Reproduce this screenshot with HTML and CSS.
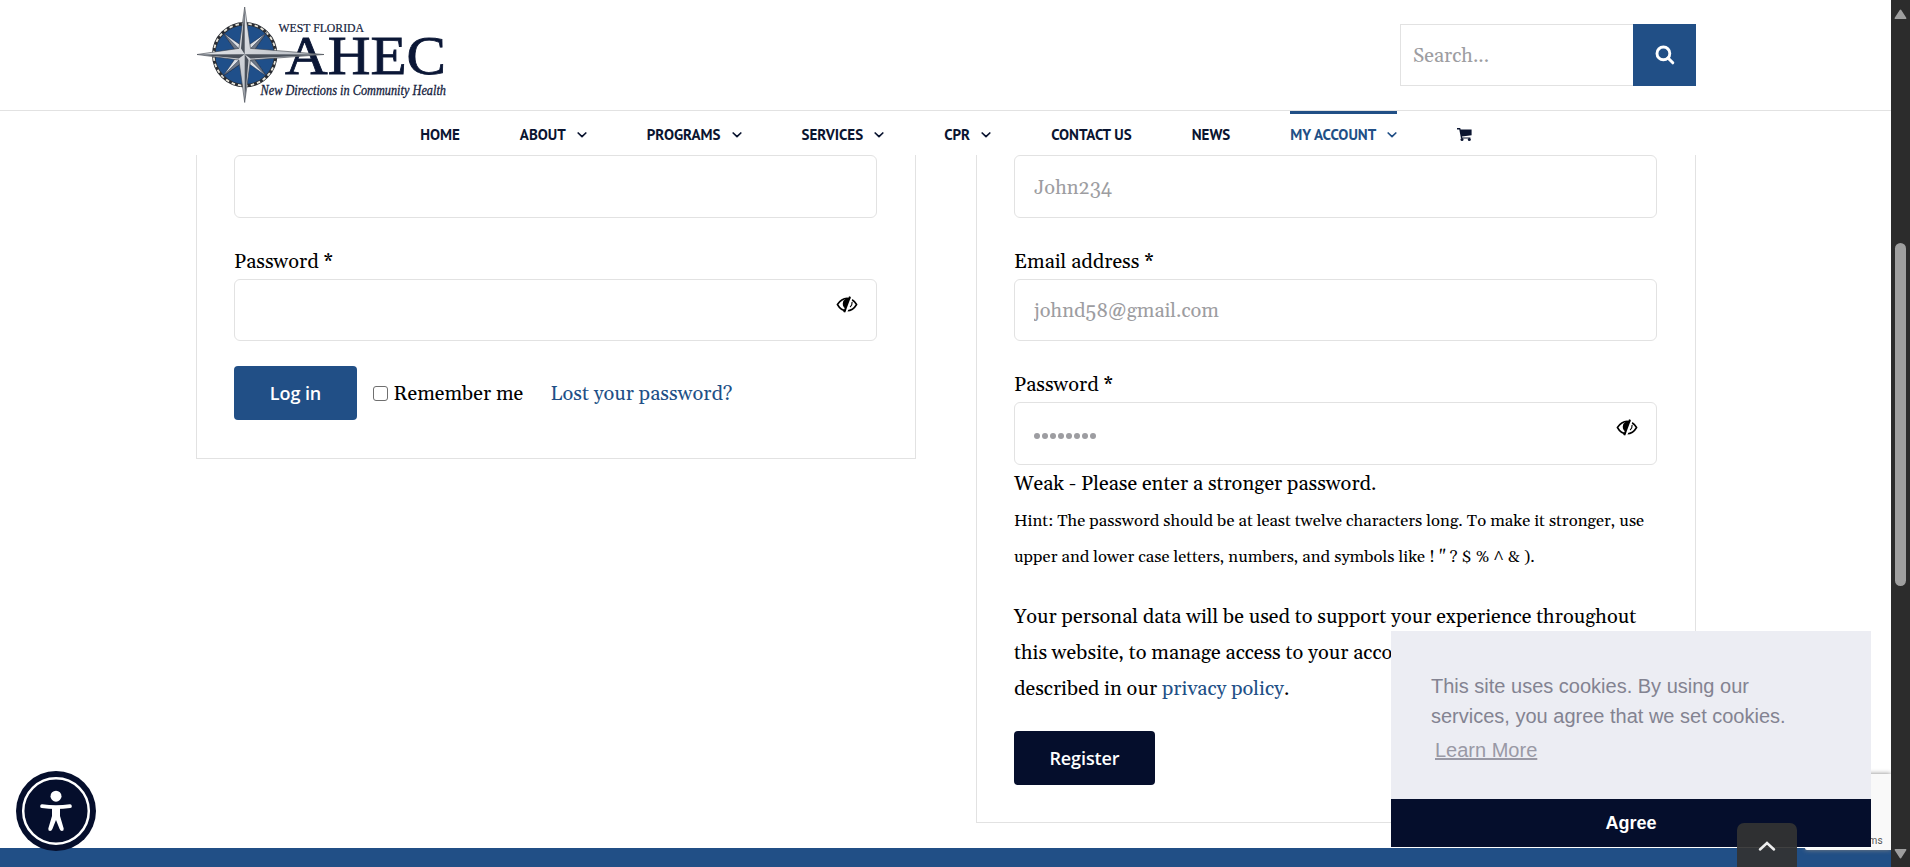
FILE: index.html
```html
<!DOCTYPE html>
<html lang="en">
<head>
<meta charset="utf-8">
<title>My Account - West Florida AHEC</title>
<link rel="stylesheet" href="styles.css">
</head>
<body>
<svg class="defs" width="0" height="0" aria-hidden="true">
  <symbol id="chev" viewBox="0 0 10 6"><path d="M1.2 1 5 4.7 8.8 1" fill="none" stroke="currentColor" stroke-width="1.7" stroke-linecap="round" stroke-linejoin="round"/></symbol>
  <symbol id="eye" viewBox="0 0 20 16">
    <path d="M1 8C4 3.4 7 2.2 10 2.2S16.500 3.600 19 8C16.500 12.400 13 13.900 10 13.900S3.500 12.600 1 8Z" fill="none" stroke="currentColor" stroke-width="1.500"/>
    <path d="M12.500 2.500 8.600 12C6 10.500 5.400 8 6.500 4.800 8 2.500 10 2 12.500 2.500Z" fill="currentColor"/>
    <path d="M14.700 1 9.200 15.500" stroke="#fff" stroke-width="2"/>
    <path d="M12.800.6 7.400 15.300" stroke="currentColor" stroke-width="1.900"/>
    <path d="M14.800 5.500C15 7.500 14.200 9.200 12.900 10.300" fill="none" stroke="currentColor" stroke-width="1.100"/>
  </symbol>
</svg>
<div class="page">
  <header class="header">
    <div class="wrap topbar">
      <svg class="logo" viewBox="196 4 252 100" width="252" height="100" role="img" aria-label="West Florida AHEC">
        <defs>
          <linearGradient id="silver" x1="0" y1="0" x2="1" y2="1"><stop offset="0" stop-color="#f7f8fa"/><stop offset="1" stop-color="#9fa5ae"/></linearGradient>
        </defs>
        <circle cx="244.700" cy="54.700" r="31" fill="#1f4f8a" stroke="#2a2d33" stroke-width="3.400"/>
        <circle cx="244.700" cy="54.700" r="31" fill="none" stroke="#e8e6dc" stroke-width="1.800" stroke-dasharray="3.500 3"/>
        <g stroke="#17233a" stroke-width=".5" transform="translate(0 .7)">
          <path d="M223 32 248.700 50 240.700 57.400Z M266.400 32 248.700 57.400 240.700 50Z M223 75.400 240.700 50 248.700 57.400Z M266.400 75.400 240.700 57.400 248.700 50Z" fill="#dcdfe4"/>
          <path d="M223 32 244.700 53.700 240.700 57.400Z M266.400 32 244.700 53.700 248.700 57.400Z M223 75.400 244.700 53.700 248.700 57.400Z M266.400 75.400 244.700 53.700 248.700 50Z" fill="#6e7887"/>
        </g>
        <text class="logo-name" x="285" y="73.700" textLength="161" lengthAdjust="spacingAndGlyphs">AHEC</text>
        <path d="M244.700 7 250.500 48.400 324 54.500 250.500 60 244.700 102.500 238.900 60 197 54.500 238.900 48.400Z" fill="url(#silver)" stroke="#3a4048" stroke-width=".6"/>
        <path d="M244.700 7V54.300L241 48.400Z M324 54.500 244.700 54.300 250.500 58.500Z M244.700 102.500V54.300L248.500 60Z M197 54.500 244.700 54.300 238.900 58.500Z" fill="#4a515b"/>
        <text class="logo-top" x="278.500" y="32" textLength="85.500" lengthAdjust="spacingAndGlyphs">WEST FLORIDA</text>
        <text class="logo-tag" x="260.500" y="94.700" textLength="185.500" lengthAdjust="spacingAndGlyphs">New Directions in Community Health</text>
      </svg>
      <form class="search">
        <input class="search-input" type="text" placeholder="Search..." aria-label="Search">
        <button class="search-btn" type="button" aria-label="Search">
          <svg width="20" height="20" viewBox="0 0 20 20"><circle cx="8.400" cy="8.400" r="6.400" fill="none" stroke="#fff" stroke-width="2.900"/><path d="M13 13 17.800 17.800" stroke="#fff" stroke-width="3" stroke-linecap="round"/></svg>
        </button>
      </form>
    </div>
    <nav class="nav">
      <a class="nav-item">HOME</a>
      <a class="nav-item">ABOUT<svg class="chev"><use href="#chev"/></svg></a>
      <a class="nav-item">PROGRAMS<svg class="chev"><use href="#chev"/></svg></a>
      <a class="nav-item">SERVICES<svg class="chev"><use href="#chev"/></svg></a>
      <a class="nav-item">CPR<svg class="chev"><use href="#chev"/></svg></a>
      <a class="nav-item">CONTACT US</a>
      <a class="nav-item">NEWS</a>
      <a class="nav-item active">MY ACCOUNT<svg class="chev"><use href="#chev"/></svg></a>
      <a class="nav-item"><svg class="cart" viewBox="0 0 15 13" width="15" height="13"><path d="M0 0H3.200L3.600 1.400H14.600V7.200L5 8.400 5.200 9.400H13.400V10.400H4L2.300 1.400H0Z" fill="currentColor"/><circle cx="5" cy="11.500" r="1.500" fill="currentColor"/><circle cx="12.300" cy="11.500" r="1.500" fill="currentColor"/></svg></a>
    </nav>
  </header>

  <main class="wrap cards">
    <section class="card card-login">
      <input class="field field-tall" type="text" aria-label="Username">
      <label class="label">Password *</label>
      <div class="field field-pw"><svg class="eye"><use href="#eye"/></svg></div>
      <div class="login-row">
        <button class="btn btn-login" type="button">Log in</button>
        <label class="remember"><input class="check" type="checkbox"><span class="row-text">Remember me</span></label>
        <a class="link row-text">Lost your password?</a>
      </div>
    </section>
    <section class="card card-register">
      <input class="field field-tall" type="text" placeholder="John234" aria-label="Username">
      <label class="label">Email address *</label>
      <input class="field" type="text" placeholder="johnd58@gmail.com" aria-label="Email">
      <label class="label">Password *</label>
      <div class="field field-tall field-pw"><span class="dots"><i></i><i></i><i></i><i></i><i></i><i></i><i></i><i></i></span><svg class="eye"><use href="#eye"/></svg></div>
      <div class="strength">Weak - Please enter a stronger password.</div>
      <div class="hint">Hint: The password should be at least twelve characters long. To make it stronger, use upper and lower case letters, numbers, and symbols like ! " ? $ % ^ &amp; ).</div>
      <p class="privacy">Your personal data will be used to support your experience throughout<br>this website, to manage access to your account, and for other purposes<br>described in our <a class="link">privacy policy</a>.</p>
      <button class="btn btn-register" type="button">Register</button>
    </section>
  </main>
  <footer class="footer"></footer>
</div>

<div class="captcha"><span class="captcha-text">Terms</span></div>
<aside class="cookie">
  <div class="cookie-body">This site uses cookies. By using our<br>services, you agree that we set cookies.<a class="learn">Learn More</a></div>
  <button class="agree" type="button">Agree</button>
</aside>
<div class="to-top"><svg width="20" height="12" viewBox="0 0 20 12"><path d="M3 9.500 10 3 17 9.500" fill="none" stroke="#eee" stroke-width="2.500" stroke-linecap="round"/></svg></div>
<div class="a11y">
  <svg width="80" height="80" viewBox="0 0 80 80"><circle cx="40" cy="40" r="40" fill="#050e2c"/><circle cx="40" cy="40" r="32.800" fill="none" stroke="#fff" stroke-width="2.500"/>
  <circle cx="40" cy="25.200" r="5.500" fill="#fff"/>
  <path d="M26 35.200Q40 37.200 54 35.200" fill="none" stroke="#fff" stroke-width="3.700" stroke-linecap="round"/>
  <path d="M36 36H44V45L47.700 57.500Q48 60 45.900 60 44.400 60 43.600 58L40 49 36.400 58Q35.600 60 34.100 60 32 60 32.300 57.500L36 45Z" fill="#fff"/></svg>
</div>
<div class="scrollbar">
  <svg width="13" height="11" viewBox="0 0 13 11"><path d="M6.500 1.500 11.500 9.200H1.500Z" fill="#9f9f9f" stroke="#9f9f9f" stroke-width="1.800" stroke-linejoin="round"/></svg>
  <div class="thumb"></div>
  <svg class="down" width="13" height="11" viewBox="0 0 13 11"><path d="M6.500 9.500 11.500 1.800H1.500Z" fill="#9f9f9f" stroke="#9f9f9f" stroke-width="1.800" stroke-linejoin="round"/></svg>
</div>
</body>
</html>
```
FILE: styles.css
```css
* { box-sizing: border-box; }
html, body { margin: 0; height: 867px; overflow: hidden; background: #fff; }
body {
  color: #000;
  font: 20px/36px Gelasio, Georgia, "Liberation Serif", serif;
  font-feature-settings: "onum";
}
button, input { font: inherit; font-feature-settings: inherit; border: 0; padding: 0; margin: 0; }
.defs { position: absolute; }
.page { width: 1891px; height: 867px; display: flex; flex-direction: column; }
.wrap { width: 1500px; margin-left: 196px; }

.header { height: 155px; flex: none; }
.topbar { height: 110px; display: flex; justify-content: space-between; align-items: flex-start; }
.logo { margin-top: 4px; }
.logo-top { font: 11.5px "Liberation Serif", serif; fill: #14213c; stroke: #14213c; stroke-width: .2px; }
.logo-name { font: 55px "Liberation Serif", serif; fill: #0b1736; stroke: #0b1736; stroke-width: .8px; }
.logo-tag { font: italic 14px "Liberation Serif", serif; fill: #14213c; stroke: #14213c; stroke-width: .3px; }
.search { display: flex; width: 296px; height: 62px; margin-top: 24px; }
.search-input { flex: 1; min-width: 0; border: 1px solid #e2e2e2; border-right: 0; padding: 2px 12px 0; background: #fff; outline: 0; }
.search-btn { width: 63px; background: #214f86; display: flex; align-items: center; justify-content: center; }
::placeholder { color: #9d9da1; opacity: 1; }

.nav {
  height: 45px; border-top: 1px solid #e2e2e2; padding-left: 420.2px;
  display: flex; gap: 60px;
  font: bold 15px/44px "PT Sans", "Open Sans", sans-serif;
  color: #0a1430;
}
.nav-item { display: flex; align-items: center; height: 44px; border-top: 3px solid transparent; line-height: 41px; white-space: nowrap; }
.active { color: #214f86; border-top-color: #214f86; }
.chev { width: 10px; height: 6px; margin-left: 11px; }

.cards { display: flex; gap: 60px; align-items: flex-start; flex: none; height: 693px; }
.card { width: 720px; border: 1px solid #e2e2e2; border-top: 0; padding: 0 37px; }
.card-login { height: 304px; }
.card-register { height: 668px; }
.field { display: block; width: 643px; height: 62px; border: 1px solid #e2e2e2; border-radius: 6px; padding: 2px 19px 0; background: #fff; outline: 0; }
.field-tall { height: 63px; }
.label { display: block; height: 36px; margin-top: 25px; padding-top: 1px; }
.field-pw { display: flex; justify-content: space-between; padding: 0 18px 0 19px; }
.field-pw .eye { width: 22px; height: 17px; margin: 16px 0 0 auto; }
.dots { display: flex; gap: 2px; align-items: center; padding-top: 4px; }
.dots i { width: 6px; height: 6px; border-radius: 50%; background: #9d9da1; }
.login-row { display: flex; align-items: center; height: 54px; margin-top: 25px; }
.row-text { padding-top: 2px; }
.btn { display: block; height: 54px; border-radius: 4px; color: #fff; font: 600 18px/54px "Open Sans", sans-serif; letter-spacing: -.1px; }
.btn-login { width: 123px; background: #214f86; }
.remember { display: flex; align-items: center; margin-left: 16px; width: 177.5px; }
.check { width: 15px; height: 15px; margin: 0 5.5px 0 0; appearance: none; border: 1px solid #6f6f6f; border-radius: 3px; background: #fff; }
.link { color: #214f86; }
.strength { height: 36px; padding-top: 1px; }
.hint { font-size: 16.667px; height: 72px; padding-top: 3px; }
.privacy { margin: 25px 0; padding-top: 1px; height: 108px; white-space: nowrap; }
.btn-register { width: 141px; background: #050e2c; }
.footer { flex: 1; background: #214f86; }

.captcha { position: absolute; left: 1805px; top: 774px; width: 86px; height: 76px; background: #f9f9f9; box-shadow: 0 0 5px gray; border-radius: 2px 0 0 2px; clip-path: inset(-6px 0 -6px -6px); }
.captcha-text { position: absolute; right: 8px; bottom: 2px; font: 10px/14px Roboto, sans-serif; color: #555; letter-spacing: .3px; }
.cookie { position: absolute; left: 1391px; top: 631px; width: 480px; height: 217px; background: #ecedf3; border-bottom: 1px solid #fff; font: 20px/30px "Liberation Sans", Arial, sans-serif; color: #838391; }
.cookie-body { height: 168px; padding: 40px 40px 0; white-space: nowrap; }
.learn { display: block; width: 103px; margin: 4px 0 0 4px; color: #9999a5; text-decoration: underline; }
.agree { display: block; width: 480px; height: 48px; background: #050e2c; color: #fff; font: bold 18px/48px "Liberation Sans", Arial, sans-serif; }
.to-top { position: absolute; left: 1737px; top: 823px; width: 60px; height: 44px; border-radius: 7px 7px 0 0; background: rgba(51, 51, 51, .93); display: flex; justify-content: center; padding-top: 17px; }
.a11y { position: absolute; left: 16px; top: 771px; width: 80px; height: 80px; }
.a11y svg { display: block; }
.scrollbar { position: absolute; left: 1891px; top: 0; width: 19px; height: 867px; background: #2c2c2c; padding: 9px 0 8px; display: flex; flex-direction: column; align-items: center; }
.thumb { width: 11px; height: 343px; margin-top: 223px; border-radius: 6px; background: #9f9f9f; }
.down { margin-top: auto; }
```
